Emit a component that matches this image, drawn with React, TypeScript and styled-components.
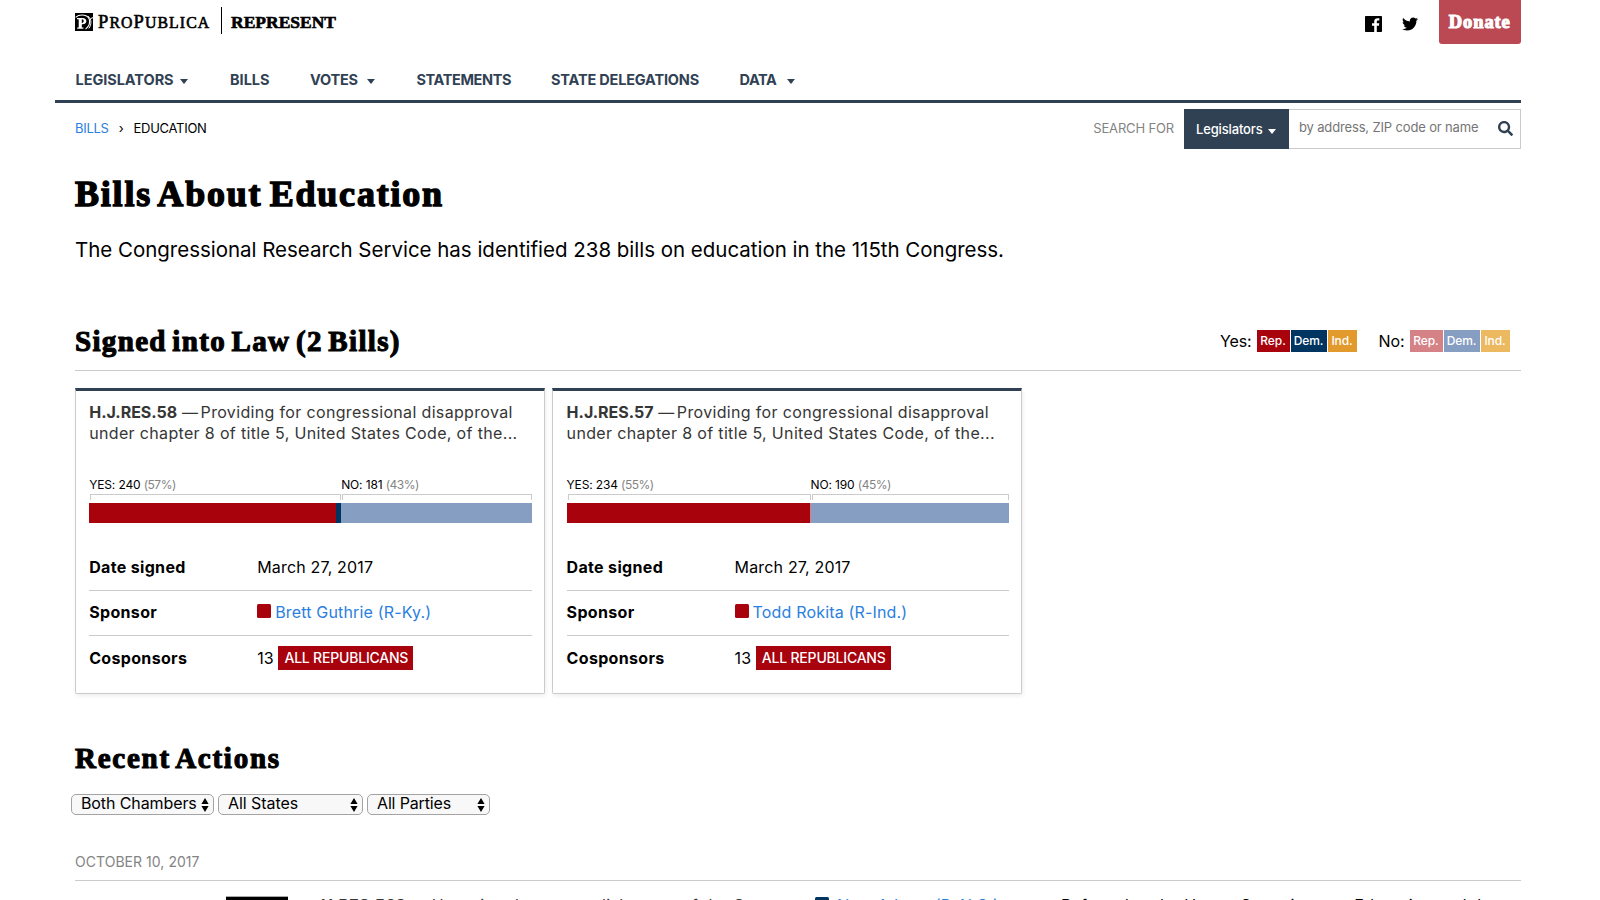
import React from "react";
import styled, { createGlobalStyle } from "styled-components";
import { FaSearch, FaTwitter } from "react-icons/fa";

const color = {
  navy: "#304154",
  link: "#2a80e0",
  rep: "#a8020d",
  dem: "#003461",
  ind: "#e39a2d",
  repLight: "#d58286",
  demLight: "#879ec3",
  indLight: "#ecb860",
  rule: "#cbcbcb",
  muted: "#848484",
};

const serif = `"Liberation Serif", "Times New Roman", serif`;

const GlobalStyle = createGlobalStyle`
  * { box-sizing: border-box; }
  body {
    margin: 0;
    height: 900px;
    overflow: hidden;
    background: #fff;
    color: #000;
    font: 400 16px/20px Inter, "Liberation Sans", sans-serif;
  }
  h1, h2, p { margin: 0; }
  a { color: ${color.link}; text-decoration: none; }
  svg { display: block; }
`;

const Page = styled.div`
  width: 1466px;
  height: 900px;
  margin-left: 55px;
  overflow: hidden;
`;

const TopBar = styled.header`
  display: flex;
  justify-content: space-between;
  height: 60px;
  padding-left: 20px;
`;

const Brand = styled.div`
  display: flex;
  align-items: center;
  height: 44px;
  font-family: ${serif};
`;

const Wordmark = styled.span`
  width: 113px;
  margin-left: 5px;
  padding-top: 1px;
  font-size: 15.8px;
  letter-spacing: 1.1px;
  white-space: nowrap;
  -webkit-text-stroke: 0.6px #000;

  big {
    font-size: 18.5px;
  }
`;

const Product = styled.span`
  height: 27px;
  margin: -3px 0 0 10px;
  padding-left: 9px;
  border-left: 1.5px solid #000;
  font-size: 17.5px;
  font-weight: 700;
  line-height: 31px;
  letter-spacing: 0;
  -webkit-text-stroke: 0.6px #000;
`;

const Social = styled.div`
  display: flex;
  height: 47px;
  align-items: center;
  gap: 20px;
`;

const Donate = styled.a`
  width: 82.5px;
  height: 44px;
  margin: -3px 0 0 1px;
  border-radius: 0 0 3px 3px;
  background: #ba4954;
  color: #fff;
  font: 700 18.5px/45px ${serif};
  letter-spacing: 0.9px;
  text-align: center;
  -webkit-text-stroke: 1.1px #fff;
`;

const Nav = styled.nav`
  display: flex;
  height: 43px;
  padding-left: 20.5px;
  border-bottom: 3px solid ${color.navy};
  color: ${color.navy};
  font-size: 14.5px;
  font-weight: 700;
`;

const NavItem = styled.span<{ $w: number; $track: number; $gap?: number }>`
  display: flex;
  align-items: center;
  gap: ${(p) => p.$gap ?? 6}px;
  width: ${(p) => p.$w}px;
  height: 39px;
  letter-spacing: ${(p) => p.$track}px;
  white-space: nowrap;
`;

const Caret = styled.i`
  border: 4.5px solid transparent;
  border-top: 5px solid currentColor;
  border-bottom: 0;
  margin-top: 3px;
`;

const SubBar = styled.div`
  display: flex;
  justify-content: space-between;
  padding: 6px 0 0 20px;
  font-size: 13px;
  line-height: 39px;
`;

const Crumbs = styled.div`
  display: flex;
  letter-spacing: -0.29px;

  span {
    width: 25px;
    text-align: center;
  }
`;

const Search = styled.div`
  display: flex;
  color: ${color.muted};
  letter-spacing: -0.15px;
`;

const SearchKind = styled.div`
  display: flex;
  align-items: center;
  gap: 5px;
  width: 105px;
  height: 40px;
  margin-left: 10px;
  padding: 1px 0 0 12px;
  background: ${color.navy};
  color: #fff;
  font-weight: 500;
`;

const SearchBox = styled.div`
  display: flex;
  justify-content: space-between;
  align-items: center;
  width: 232px;
  height: 40px;
  padding: 0 7px 3px 10px;
  border: 1px solid ${color.rule};
  border-left: 0;
  color: #757575;

  svg {
    margin-top: 1px;
    color: ${color.navy};
  }
`;

const Content = styled.main`
  padding: 25px 0 0 20px;
`;

const Title = styled.h1`
  font: 700 36px/41px ${serif};
  letter-spacing: 1.8px;
  word-spacing: -3.5px;
  -webkit-text-stroke: 1.4px #000;
`;

const Lede = styled.p`
  margin-top: 20px;
  font-size: 20.5px;
  line-height: 29px;
  letter-spacing: -0.02px;
`;

const SectionHead = styled.div`
  display: flex;
  justify-content: space-between;
  align-items: center;
  height: 59px;
  margin-top: 48px;
  padding-right: 11px;
  border-bottom: 1px solid ${color.rule};
`;

const Heading = styled.h2<{ $track: number }>`
  font: 700 29px/29px ${serif};
  letter-spacing: ${(p) => p.$track}px;
  word-spacing: -3px;
  -webkit-text-stroke: 1.1px #000;
`;

const Legend = styled.div`
  display: flex;
  align-items: center;
  gap: 22px;
  margin-right: 0.5px;
`;

const LegendGroup = styled.div`
  display: flex;
  align-items: center;
  gap: 1px;
  letter-spacing: -0.1px;

  b {
    margin-right: 4px;
    font-weight: 400;
  }
`;

const Chip = styled.span<{ $bg: string; $w: number }>`
  width: ${(p) => p.$w}px;
  height: 22px;
  background: ${(p) => p.$bg};
  color: #fff;
  font-size: 12px;
  font-weight: 500;
  line-height: 22px;
  text-align: center;
`;

const Cards = styled.div`
  display: flex;
  gap: 7.4px;
  margin-top: 17px;
`;

const CardBox = styled.article`
  width: 470px;
  height: 306px;
  padding: 11px 12.5px 0 13.2px;
  border: 1px solid ${color.rule};
  border-top: 3px solid ${color.navy};
  border-radius: 0 0 2px 2px;
  box-shadow: 1px 2px 4px rgba(0, 0, 0, 0.07);
`;

const BillTitle = styled.p`
  height: 41px;
  color: #363636;
  line-height: 20.5px;
  letter-spacing: 0.34px;
  white-space: nowrap;

  b {
    letter-spacing: 0;
  }
`;

const Dash = styled.span`
  letter-spacing: -1px;
`;

const Vote = styled.div<{ $yes: number }>`
  display: grid;
  grid-template-columns: ${(p) => p.$yes}px 1fr;
  margin-top: 33px;
`;

const VoteLabel = styled.div`
  height: 18px;
  font-size: 12px;
  line-height: 17px;
  letter-spacing: -0.14px;

  span {
    color: ${color.muted};
    letter-spacing: -0.5px;
  }
`;

const Bracket = styled.div`
  height: 6px;
  margin: 0 0 3px 1px;
  border: 1px solid ${color.rule};
  border-bottom: 0;
`;

const Bar = styled.div`
  display: flex;
  grid-column: 1 / -1;
  height: 20px;
`;

const Segment = styled.div<{ $bg: string; $w?: number }>`
  flex: ${(p) => (p.$w ? `0 0 ${p.$w}px` : "1")};
  background: ${(p) => p.$bg};
`;

const Facts = styled.dl`
  margin: 22px 0 0;
`;

const Fact = styled.div`
  display: flex;
  align-items: center;
  height: 45px;
  padding-bottom: 2px;
  letter-spacing: 0.17px;

  &:not(:last-child) {
    border-bottom: 1px solid ${color.rule};
  }
  &:first-child {
    height: 46px;
  }

  dt {
    width: 168px;
    font-weight: 700;
    letter-spacing: 0.33px;
  }
  dd {
    display: flex;
    align-items: center;
    margin: 0;
  }
`;

const PartySquare = styled.i<{ $bg: string }>`
  width: 14px;
  height: 14px;
  margin: -2px 4px 0 0;
  border-radius: 1.5px;
  background: ${(p) => p.$bg};
`;

const PartyTag = styled.span`
  height: 24px;
  margin-left: 4.5px;
  padding: 0 5px 0 6px;
  background: ${color.rep};
  color: #fff;
  font-size: 14px;
  font-weight: 500;
  line-height: 24px;
  letter-spacing: -0.2px;
`;

const Recent = styled.section`
  padding-top: 50px;
`;

const Filters = styled.div`
  display: flex;
  gap: 4px;
  margin: 21px 0 0 -4px;
`;

const Select = styled.div<{ $w: number; $track?: number }>`
  display: flex;
  justify-content: space-between;
  align-items: center;
  width: ${(p) => p.$w}px;
  height: 21px;
  padding: 0 4px 0 9px;
  border: 1px solid #a3a3a3;
  border-radius: 5px;
  background: #f8f8f8;
  line-height: 18px;
  letter-spacing: ${(p) => p.$track ?? -0.05}px;
  white-space: nowrap;

  span {
    margin-top: -3px;
  }
`;

const DateLabel = styled.div`
  height: 28px;
  margin-top: 38px;
  border-bottom: 1px solid ${color.rule};
  color: ${color.muted};
  font-size: 14px;
  line-height: 18px;
  letter-spacing: 0.04px;
`;

const ActionRow = styled.div`
  display: grid;
  grid-template-columns: 62px 520px 253px 1fr;
  padding: 15px 0 0 151px;
  color: #363636;
  line-height: 18px;
  white-space: nowrap;
`;

const ActionBadge = styled.div`
  height: 24px;
  border-top: 1px solid #aaa;
  background: #000;
`;

const ActionTitle = styled.div`
  padding-left: 33px;
  letter-spacing: 0.34px;

  b {
    letter-spacing: 0.1px;
  }
`;

const ActionSponsor = styled.div`
  display: flex;
  padding-left: 7px;
  letter-spacing: 0.15px;
`;

const ActionSquare = styled(PartySquare)`
  margin: 1px 5px 0 0;
`;

const ActionStatus = styled.div`
  letter-spacing: 0.36px;
  color: #000;
`;

const LogoMark = () => (
  <svg width="18" height="18" viewBox="0 0 18 18">
    <rect width="18" height="18" />
    <path d="M0.6 4.4C5 0.6 14.6 1.2 14.6 8.6c0 3.6-1.6 5.8-4 7.4" fill="none" stroke="#fff" strokeWidth="1.1" />
    <path d="M13.2 3.2c3.4 2.6 3.6 8.6.6 12.2M15.6 5.6l2.4-1" fill="none" stroke="#fff" strokeWidth="1" />
    <path
      fill="#fff"
      fillRule="evenodd"
      d="M2 5h5.6c5 0 5 6.2 0 6.2H6.8v3.4h1.6v1.2H2.2v-1.2h1.5V6.2H2zM6.8 6.3v3.6c2.6.3 2.6-3.8 0-3.6z"
    />
  </svg>
);

const FacebookMark = () => (
  <svg width="17" height="16" viewBox="0 0 17 16">
    <path d="M.8 0h15.4c.5 0 .8.3.8.8v14.4c0 .5-.3.8-.8.8h-4.4V9.8h2.1l.4-2.5h-2.5V5.8c0-.8.3-1.2 1.2-1.2h1.3V2.3c-3.300-.5-5.100.6-5.100 3.100v1.900H7v2.500h2.200V16H.8c-.5 0-.8-.3-.8-.8V.8C0 .3.3 0 .8 0z" />
  </svg>
);

const Stepper = () => (
  <svg width="8" height="14" viewBox="0 0 8 14">
    <path d="M4 0L7.600 6H.4zM4 14L7.600 8H.4z" />
  </svg>
);

type Bill = {
  id: string;
  yes: string;
  yesPct: string;
  no: string;
  noPct: string;
  yesWidth: number;
  demYes?: number;
  repNo?: number;
  sponsor: string;
};

const bills: Bill[] = [
  { id: "H.J.RES.58", yes: "240", yesPct: "57%", no: "181", noPct: "43%", yesWidth: 252, demYes: 5, sponsor: "Brett Guthrie (R-Ky.)" },
  { id: "H.J.RES.57", yes: "234", yesPct: "55%", no: "190", noPct: "45%", yesWidth: 244, repNo: 1, sponsor: "Todd Rokita (R-Ind.)" },
];

const BillCard = ({ bill }: { bill: Bill }) => (
  <CardBox>
    <BillTitle>
      <b>{bill.id}</b> <Dash>— </Dash>Providing for congressional disapproval
      <br />
      under chapter 8 of title 5, United States Code, of the...
    </BillTitle>
    <Vote $yes={bill.yesWidth}>
      <VoteLabel>
        YES: {bill.yes} <span>({bill.yesPct})</span>
      </VoteLabel>
      <VoteLabel>
        NO: {bill.no} <span>({bill.noPct})</span>
      </VoteLabel>
      <Bracket />
      <Bracket />
      <Bar>
        <Segment $bg={color.rep} $w={bill.yesWidth - (bill.demYes ?? bill.repNo ?? 0)} />
        {bill.demYes && <Segment $bg={color.dem} $w={bill.demYes} />}
        {bill.repNo && <Segment $bg={color.repLight} $w={bill.repNo} />}
        <Segment $bg={color.demLight} />
      </Bar>
    </Vote>
    <Facts>
      <Fact>
        <dt>Date signed</dt>
        <dd>March 27, 2017</dd>
      </Fact>
      <Fact>
        <dt>Sponsor</dt>
        <dd>
          <PartySquare $bg={color.rep} />
          <a>{bill.sponsor}</a>
        </dd>
      </Fact>
      <Fact>
        <dt>Cosponsors</dt>
        <dd>
          13<PartyTag>ALL REPUBLICANS</PartyTag>
        </dd>
      </Fact>
    </Facts>
  </CardBox>
);

export default function App() {
  return (
    <Page>
      <GlobalStyle />
      <TopBar>
        <Brand>
          <LogoMark />
          <Wordmark>
            <big>P</big>RO<big>P</big>UBLICA
          </Wordmark>
          <Product>REPRESENT</Product>
        </Brand>
        <Social>
          <FacebookMark />
          <FaTwitter size={16} color="#000" />
          <Donate>Donate</Donate>
        </Social>
      </TopBar>
      <Nav>
        <NavItem $w={154.5} $track={-0.05}>LEGISLATORS <Caret /></NavItem>
        <NavItem $w={80} $track={0}>BILLS</NavItem>
        <NavItem $w={106.5} $track={-0.25} $gap={9}>VOTES <Caret /></NavItem>
        <NavItem $w={134.5} $track={-0.39}>STATEMENTS</NavItem>
        <NavItem $w={188.5} $track={-0.18}>STATE DELEGATIONS</NavItem>
        <NavItem $w={60} $track={-0.4} $gap={10}>DATA <Caret /></NavItem>
      </Nav>
      <SubBar>
        <Crumbs>
          <a>BILLS</a>
          <span>›</span>
          EDUCATION
        </Crumbs>
        <Search>
          SEARCH FOR
          <SearchKind>Legislators <Caret /></SearchKind>
          <SearchBox>
            by address, ZIP code or name
            <FaSearch size={15} />
          </SearchBox>
        </Search>
      </SubBar>
      <Content>
        <Title>Bills About Education</Title>
        <Lede>The Congressional Research Service has identified 238 bills on education in the 115th Congress.</Lede>
        <SectionHead>
          <Heading $track={1.33}>Signed into Law (2 Bills)</Heading>
          <Legend>
            <LegendGroup>
              <b>Yes:</b>
              <Chip $bg={color.rep} $w={33}>Rep.</Chip>
              <Chip $bg={color.dem} $w={36}>Dem.</Chip>
              <Chip $bg={color.ind} $w={29}>Ind.</Chip>
            </LegendGroup>
            <LegendGroup>
              <b>No:</b>
              <Chip $bg={color.repLight} $w={33}>Rep.</Chip>
              <Chip $bg={color.demLight} $w={36}>Dem.</Chip>
              <Chip $bg={color.indLight} $w={29}>Ind.</Chip>
            </LegendGroup>
          </Legend>
        </SectionHead>
        <Cards>
          {bills.map((bill) => (
            <BillCard key={bill.id} bill={bill} />
          ))}
        </Cards>
        <Recent>
          <Heading $track={1.74}>Recent Actions</Heading>
          <Filters>
            <Select $w={143} $track={-0.1}><span>Both Chambers</span><Stepper /></Select>
            <Select $w={145}><span>All States</span><Stepper /></Select>
            <Select $w={122.5} $track={-0.15}><span>All Parties</span><Stepper /></Select>
          </Filters>
          <DateLabel>OCTOBER 10, 2017</DateLabel>
          <ActionRow>
            <ActionBadge />
            <ActionTitle>
              <b>H.RES.562</b> — Honoring the accomplishments of the Cancer
            </ActionTitle>
            <ActionSponsor>
              <ActionSquare $bg={color.dem} />
              <a>Alma Adams (D-N.C.)</a>
            </ActionSponsor>
            <ActionStatus>Referred to the House Committee on Education and the</ActionStatus>
          </ActionRow>
        </Recent>
      </Content>
    </Page>
  );
}
